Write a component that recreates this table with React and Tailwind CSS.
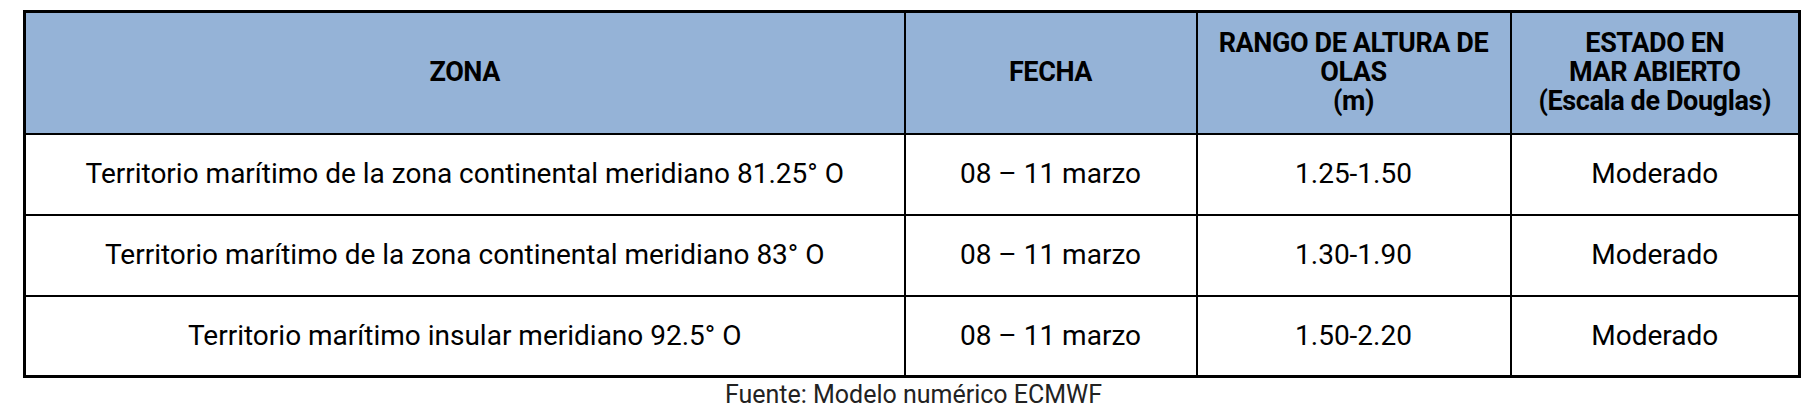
const ROWS = [
  {
    zona: 'Territorio marítimo de la zona continental meridiano 81.25° O',
    fecha: '08 – 11 marzo',
    rango: '1.25-1.50',
    estado: 'Moderado',
  },
  {
    zona: 'Territorio marítimo de la zona continental meridiano 83° O',
    fecha: '08 – 11 marzo',
    rango: '1.30-1.90',
    estado: 'Moderado',
  },
  {
    zona: 'Territorio marítimo insular meridiano 92.5° O',
    fecha: '08 – 11 marzo',
    rango: '1.50-2.20',
    estado: 'Moderado',
  },
]

function App() {
  return (
    <main className="bg-white w-[1816px] h-[416px] pt-[10px] pl-[23px] font-['Roboto','Liberation_Sans',sans-serif] text-black">
      <div className="w-[1775px]">
        <table className="w-full table-fixed border-collapse border-[3px] border-black">
          <colgroup>
            <col className="w-[880px]" />
            <col className="w-[292px]" />
            <col className="w-[314px]" />
            <col className="w-[289px]" />
          </colgroup>
          <thead>
            <tr className="h-[122px] bg-[#95b3d7] text-[27px] font-bold leading-[29px] tracking-[-0.4px]">
              <th className="border-2 border-black">ZONA</th>
              <th className="border-2 border-black">FECHA</th>
              <th className="border-2 border-black">
                RANGO DE ALTURA DE
                <br />
                OLAS
                <br />
                (m)
              </th>
              <th className="border-2 border-black">
                ESTADO EN
                <br />
                MAR ABIERTO
                <br />
                (Escala de Douglas)
              </th>
            </tr>
          </thead>
          <tbody className="text-[28px] text-center">
            {ROWS.map((row, i) => (
              <tr key={i} className="h-[81px]">
                <td className="border-2 border-black">{row.zona}</td>
                <td className="border-2 border-black">{row.fecha}</td>
                <td className="border-2 border-black">{row.rango}</td>
                <td className="border-2 border-black">{row.estado}</td>
              </tr>
            ))}
          </tbody>
        </table>
        <p className="mt-[1px] text-center text-[25px] leading-[32px] text-[#222] pl-[6px]">
          Fuente: Modelo numérico ECMWF
        </p>
      </div>
    </main>
  )
}

export default App
